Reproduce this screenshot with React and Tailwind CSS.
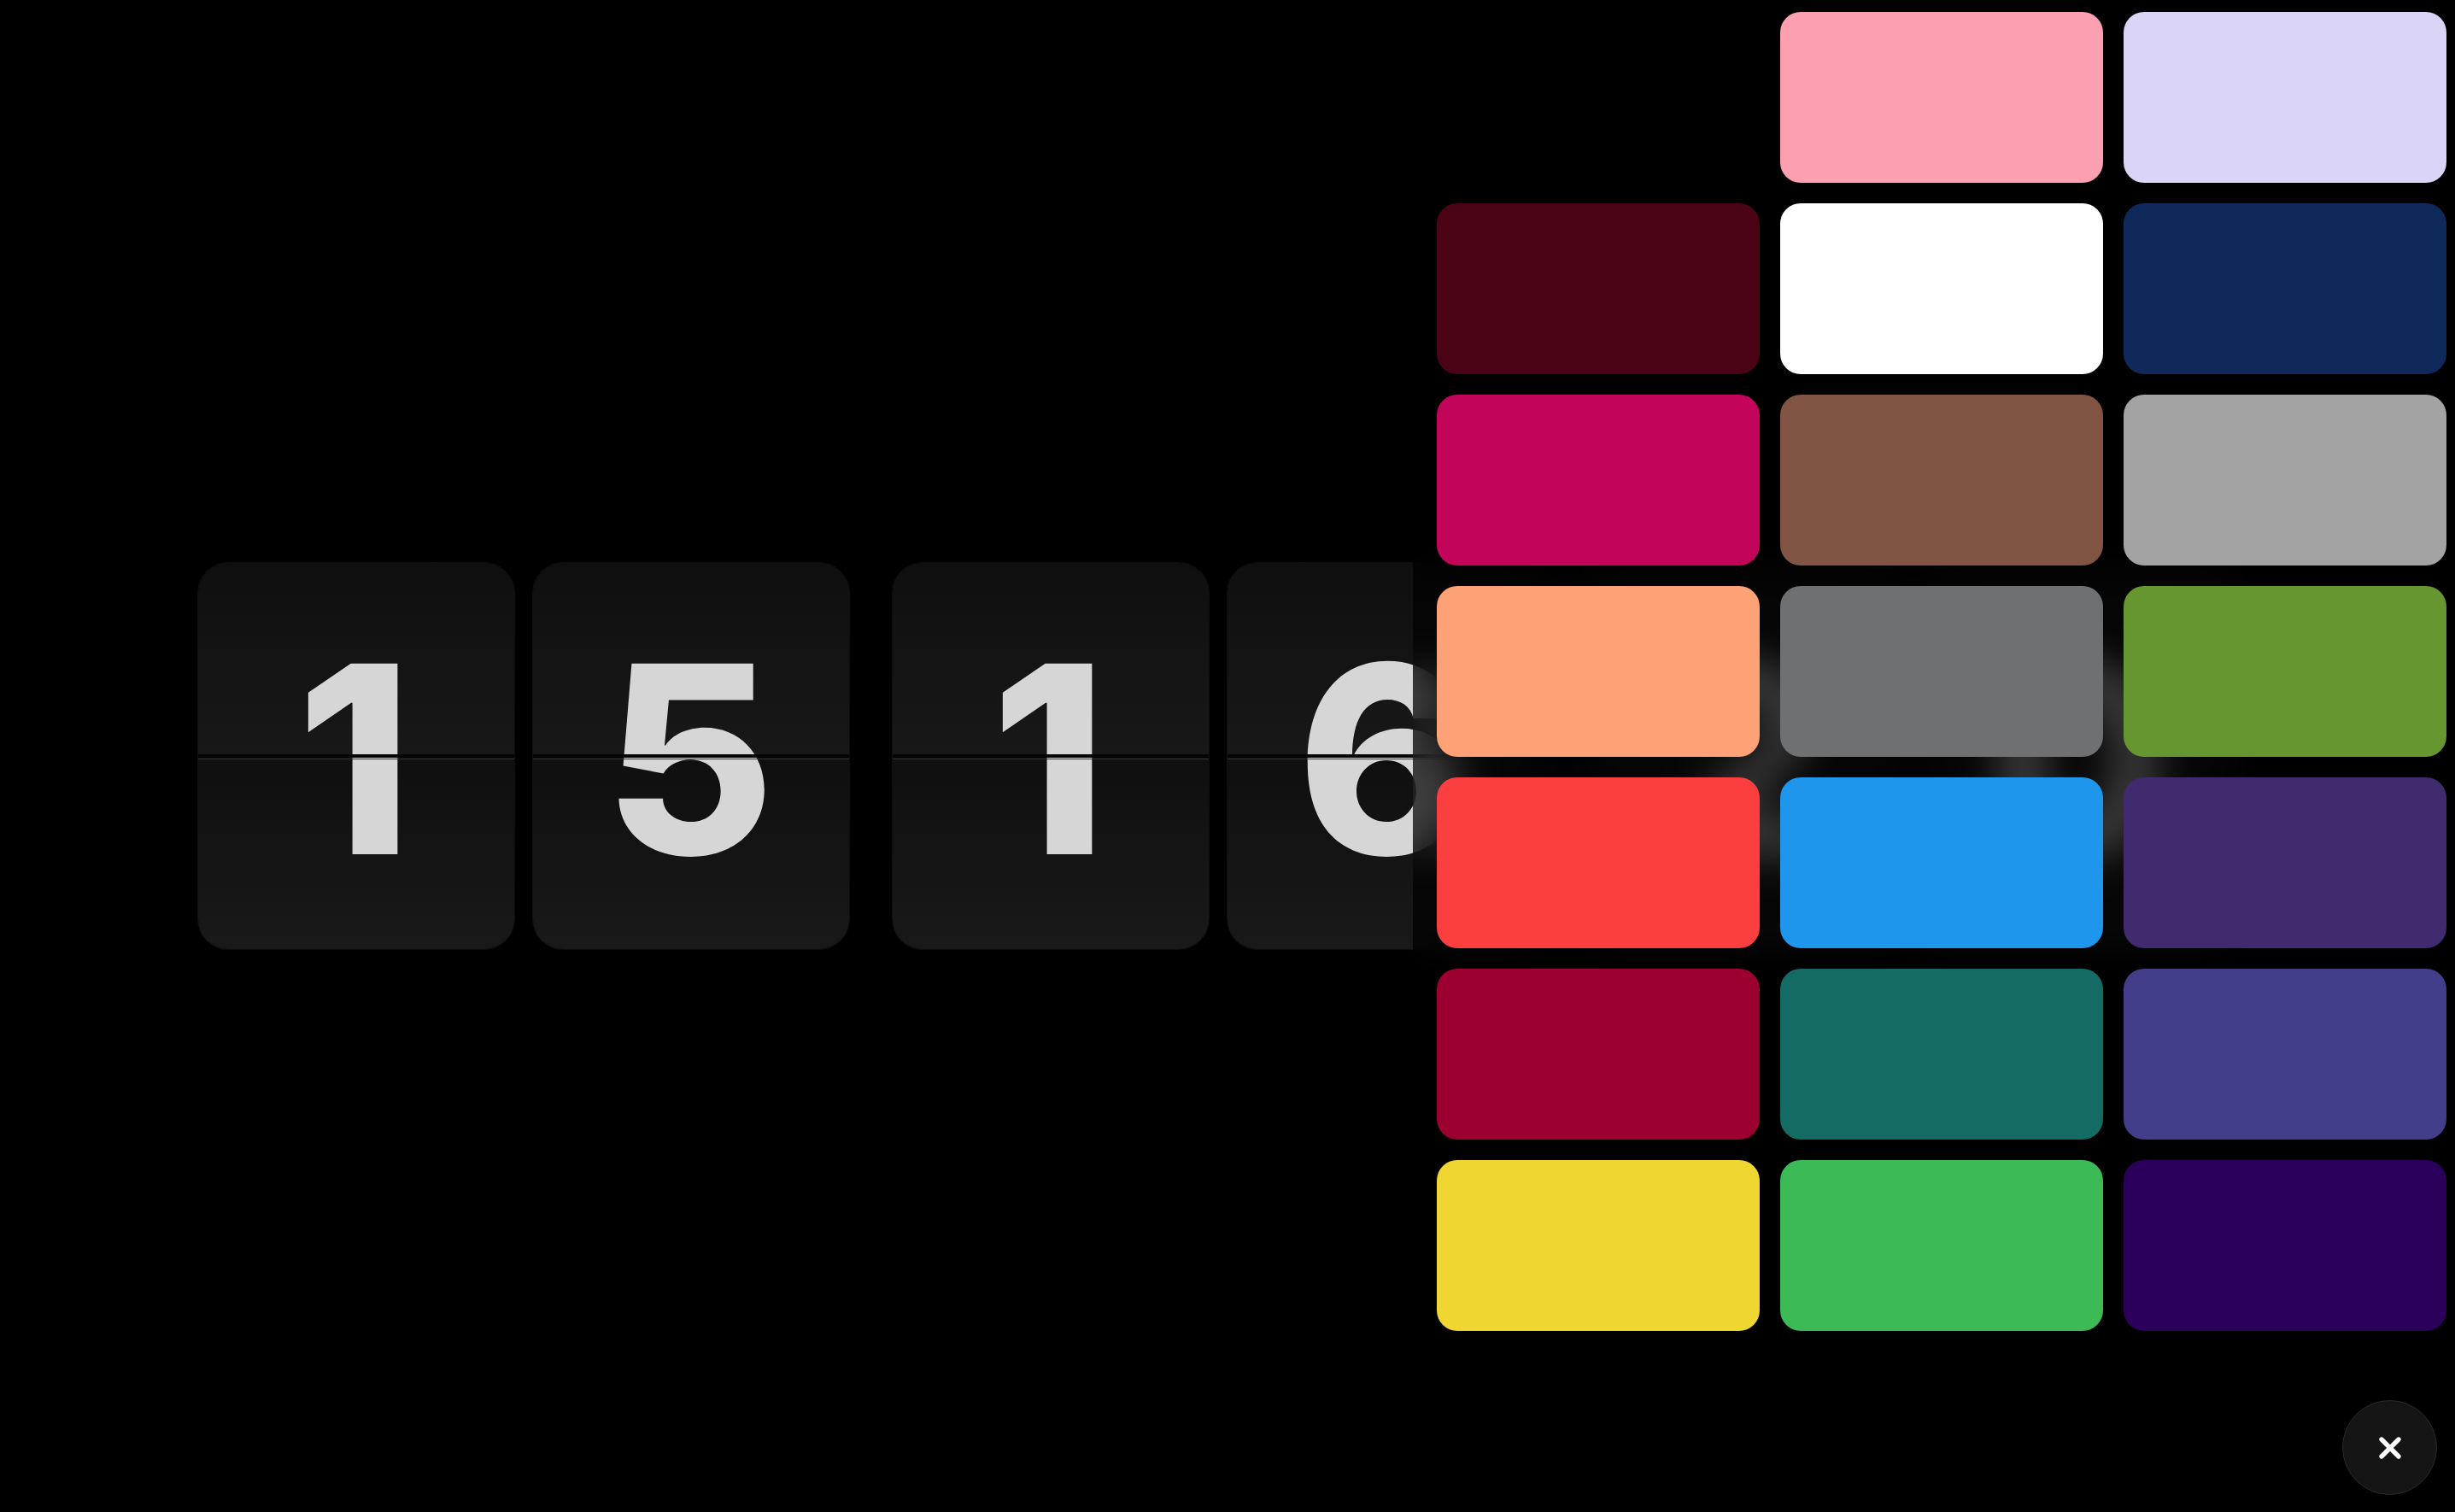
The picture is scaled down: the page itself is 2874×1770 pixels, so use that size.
import { X } from 'lucide-react'

const time = [['1', '5'], ['1', '6'], ['2', '0']]

const swatches = [
  '#000000', '#fb9fb1', '#dad5f7',
  '#4b0415', '#ffffff', '#0f2a5a',
  '#c3045b', '#825443', '#a3a3a3',
  '#fda276', '#6f7072', '#669630',
  '#fb3f41', '#1e96eb', '#3f2b6d',
  '#9c0030', '#146b64', '#433e89',
  '#f0d631', '#3bba55', '#2a005b',
]

function FlipCard({ digit }) {
  return (
    <div className="relative w-[372px] h-[454px] rounded-[36px] overflow-hidden border border-white/[0.06] flex flex-col">
      {/* card halves */}
      <div className="flex-1 bg-gradient-to-b from-[#0f0f0f] to-[#181818]" />
      <div className="flex-1 bg-gradient-to-b from-[#0f0f0f] to-[#191919]" />

      {/* digit */}
      <div className="absolute inset-0 flex items-center justify-center pt-[6px] pr-[4px]">
        <span
          className="text-[307px] leading-none font-extrabold text-[#d6d6d6] select-none"
          style={{ fontFamily: 'Inter, "Liberation Sans", sans-serif' }}
        >
          {digit}
        </span>
      </div>

      {/* hinge */}
      <div className="absolute left-0 right-0 top-[224px] h-[4px] bg-[#050505]" />
      <div className="absolute left-0 right-0 top-[229px] h-px bg-[#333333]" />
    </div>
  )
}

export default function App() {
  return (
    <div className="relative w-full h-screen bg-black overflow-hidden">
      {/* Clock */}
      <div className="h-full flex items-center pl-[231px] gap-[49px]">
        {time.map((pair, i) => (
          <div key={i} className="flex gap-5">
            {pair.map((d, j) => (
              <FlipCard key={j} digit={d} />
            ))}
          </div>
        ))}
      </div>

      {/* Colour picker drawer */}
      <aside className="absolute inset-y-0 right-0 w-[1220px] bg-black/70 backdrop-blur-xl pl-[28px] pr-[10px] pt-[14px]">
        <div className="grid grid-cols-3 gap-6">
          {swatches.map((c, i) => (
            <button
              key={i}
              className="h-[200px] rounded-3xl"
              style={{ backgroundColor: c }}
            />
          ))}
        </div>
      </aside>

      {/* Close button */}
      <button className="absolute right-[21px] bottom-[20px] w-[111px] h-[111px] rounded-full bg-[#151515] border border-[#2a2a2a] flex items-center justify-center text-white">
        <X size={40} strokeWidth={3.2} />
      </button>
    </div>
  )
}
